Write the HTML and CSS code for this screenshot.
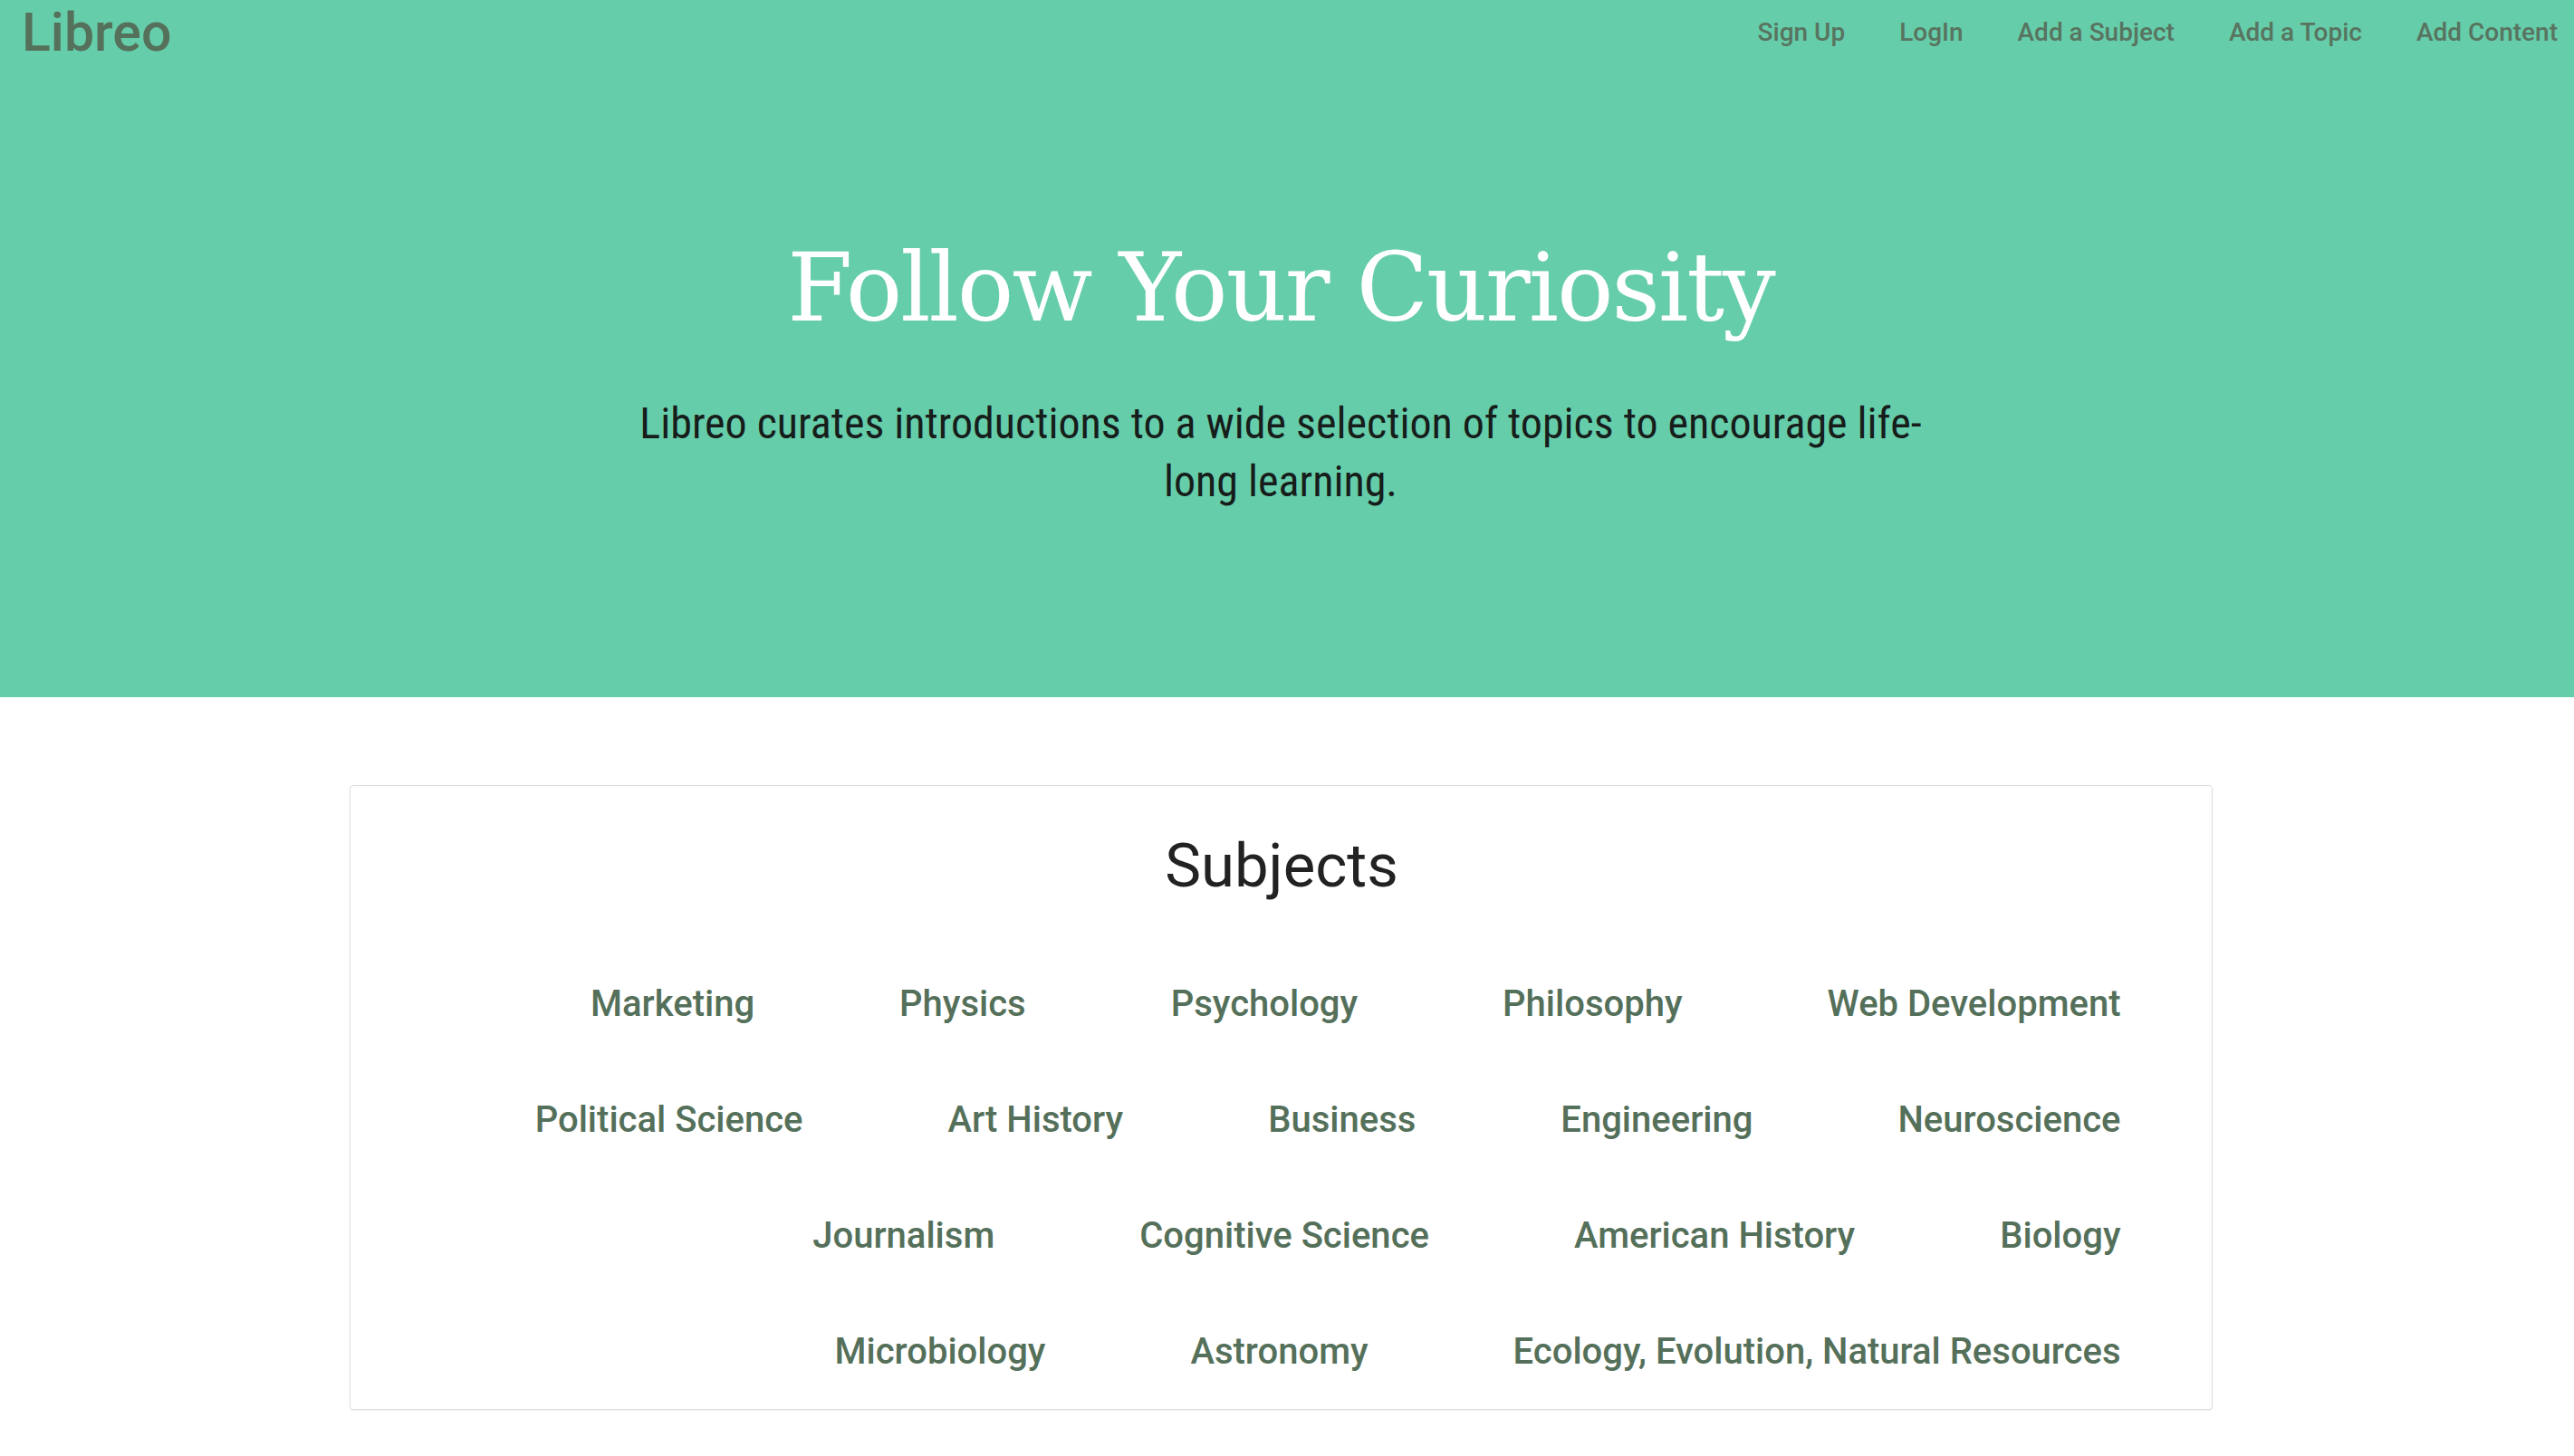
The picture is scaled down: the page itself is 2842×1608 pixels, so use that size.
FILE: index.html
```html
<!DOCTYPE html>
<html lang="en">
<head>
<meta charset="utf-8">
<title>Libreo</title>
<link rel="stylesheet" href="styles.css">
</head>
<body>
<header class="hero">
  <nav class="navbar">
    <a class="brand" href="#">Libreo</a>
    <ul class="nav-links">
      <li><a href="#">Sign Up</a></li>
      <li><a href="#">LogIn</a></li>
      <li><a href="#">Add a Subject</a></li>
      <li><a href="#">Add a Topic</a></li>
      <li><a href="#">Add Content</a></li>
    </ul>
  </nav>
  <div class="hero-content">
    <h1 class="hero-title">Follow Your Curiosity</h1>
    <p class="hero-lead">Libreo curates introductions to a wide selection of topics to encourage life-long learning.</p>
  </div>
</header>
<main class="main">
  <section class="panel">
    <h2 class="panel-title">Subjects</h2>
    <div class="subject-row">
      <a class="subject" href="#">Marketing</a>
      <a class="subject" href="#">Physics</a>
      <a class="subject" href="#">Psychology</a>
      <a class="subject" href="#">Philosophy</a>
      <a class="subject" href="#">Web Development</a>
    </div>
    <div class="subject-row">
      <a class="subject" href="#">Political Science</a>
      <a class="subject" href="#">Art History</a>
      <a class="subject" href="#">Business</a>
      <a class="subject" href="#">Engineering</a>
      <a class="subject" href="#">Neuroscience</a>
    </div>
    <div class="subject-row">
      <a class="subject" href="#">Journalism</a>
      <a class="subject" href="#">Cognitive Science</a>
      <a class="subject" href="#">American History</a>
      <a class="subject" href="#">Biology</a>
    </div>
    <div class="subject-row">
      <a class="subject" href="#">Microbiology</a>
      <a class="subject" href="#">Astronomy</a>
      <a class="subject" href="#">Ecology, Evolution, Natural Resources</a>
    </div>
  </section>
</main>
</body>
</html>
```

FILE: styles.css
```css
* {
  box-sizing: border-box;
}

html, body {
  margin: 0;
  padding: 0;
  background: #ffffff;
}

body {
  font-family: Roboto, "Noto Sans", "Liberation Sans", sans-serif;
  color: #222222;
}

a {
  text-decoration: none;
}

.hero {
  background: #66cdaa;
  height: 770px;
}

.navbar {
  display: flex;
  justify-content: space-between;
  align-items: flex-start;
  height: 80px;
  padding: 0 18px 0 24px;
}

.brand {
  font-size: 59px;
  font-weight: 500;
  line-height: 1;
  padding-top: 6px;
  color: #55705b;
}

.nav-links {
  display: flex;
  gap: 60px;
  list-style: none;
  margin: 0;
  padding: 22px 0 0 0;
}

.nav-links a {
  display: block;
  font-size: 28px;
  font-weight: 500;
  line-height: 1;
  color: #587460;
}

.hero-content {
  display: flex;
  flex-direction: column;
  align-items: center;
  padding-right: 14px;
}

.hero-title {
  margin: 172px 0 0 0;
  font-family: "DejaVu Serif", "Liberation Serif", serif;
  font-weight: 400;
  font-size: 104px;
  line-height: 132px;
  color: #ffffff;
  letter-spacing: -2px;
}

.hero-lead {
  margin: 52px 0 0 0;
  max-width: 1440px;
  text-align: center;
  font-family: "Liberation Sans Narrow", "Roboto Condensed", Roboto, sans-serif;
  font-size: 48px;
  line-height: 64px;
  color: #161d1a;
}

.main {
  padding: 97px 14px 60px 0;
}

.panel {
  width: 2057px;
  margin: 0 auto;
  border: 1px solid #dddddd;
  border-radius: 4px;
  box-shadow: 0 1px 1px rgba(0, 0, 0, 0.08);
  padding: 51px 100px 0 102px;
  height: 690px;
}

.panel-title {
  margin: 0 0 52px 0;
  text-align: center;
  font-size: 67px;
  font-weight: 400;
  line-height: 74px;
  color: #222222;
}

.subject-row {
  display: flex;
  justify-content: flex-end;
  gap: 160px;
  height: 128px;
}

.subject {
  font-size: 40px;
  font-weight: 500;
  line-height: 128px;
  color: #55705a;
  white-space: nowrap;
}
```
